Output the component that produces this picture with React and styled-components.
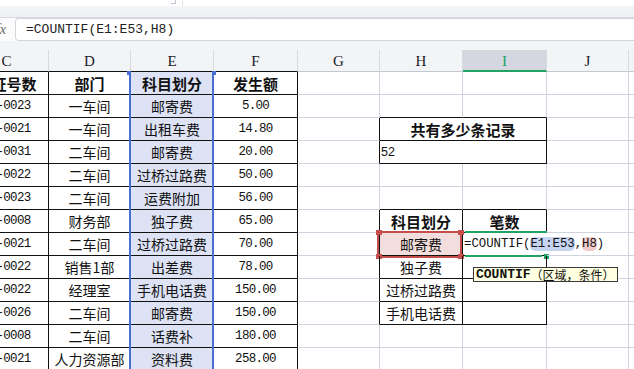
import React from 'react';
import styled, { createGlobalStyle } from 'styled-components';

const GRID = '#cfd3df';
const DARK = '#111';
const GREEN = '#21a366';
const BLUE = '#4a6fd3';
const RED = '#c44f4c';

const COLUMNS = [
  { id: 'C', width: 84 },
  { id: 'D', width: 82 },
  { id: 'E', width: 83 },
  { id: 'F', width: 84 },
  { id: 'G', width: 82 },
  { id: 'H', width: 83 },
  { id: 'I', width: 84 },
  { id: 'J', width: 82 },
  { id: 'K', width: 60 },
];

// 凭证号 / 部门 / 科目划分 / 发生额
const ledger = [
  ['凭证号数', '部门', '科目划分', '发生额'],
  ['记-0023', '一车间', '邮寄费', '5.00'],
  ['记-0021', '一车间', '出租车费', '14.80'],
  ['记-0031', '二车间', '邮寄费', '20.00'],
  ['记-0022', '二车间', '过桥过路费', '50.00'],
  ['记-0023', '二车间', '运费附加', '56.00'],
  ['记-0008', '财务部', '独子费', '65.00'],
  ['记-0021', '二车间', '过桥过路费', '70.00'],
  ['记-0022', '销售1部', '出差费', '78.00'],
  ['记-0022', '经理室', '手机电话费', '150.00'],
  ['记-0026', '二车间', '邮寄费', '150.00'],
  ['记-0008', '二车间', '话费补', '180.00'],
  ['记-0021', '人力资源部', '资料费', '258.00'],
];

const summary = {
  7: ['科目划分', '笔数'],
  8: ['邮寄费', ''],
  9: ['独子费', ''],
  10: ['过桥过路费', ''],
  11: ['手机电话费', ''],
};

const ROW_COUNT = 13;

const inTable = (r, c) => {
  if (r >= 1 && r <= 13 && c >= 0 && c <= 3) return true;
  if ((r === 3 || r === 4 || (r >= 7 && r <= 11)) && (c === 5 || c === 6)) return true;
  return false;
};

const GlobalStyle = createGlobalStyle`
  html, body {
    margin: 0;
    padding: 0;
    background: #fff;
  }
  body {
    font-family: "Noto Sans CJK SC", "Noto Sans", sans-serif;
  }
`;

const Page = styled.div`
  width: 634px;
  height: 369px;
  overflow: hidden;
  background: #fff;
`;

const TopStrip = styled.div`
  height: 6px;
  display: flex;
  align-items: flex-start;
`;

const StripCorner = styled.span`
  margin-left: 171px;
  width: 4px;
  height: 3px;
  border-right: 1px solid #c3c6cd;
  border-bottom: 1px solid #c3c6cd;
`;

const StripDivider = styled.span`
  margin-left: 6px;
  width: 1px;
  height: 6px;
  background: #e2e4e8;
`;

const TabBand = styled.div`
  height: 11px;
  background: linear-gradient(#f4f5f7, #eef0f3);
  border-bottom: 1px solid #d7dae0;
`;

const FormulaRow = styled.div`
  height: 23px;
  display: flex;
  align-items: stretch;
  background: #fbfbfc;
`;

const FxMark = styled.span`
  width: 15px;
  flex: none;
  display: flex;
  align-items: center;
  justify-content: flex-end;
  padding-right: 9px;
  box-sizing: border-box;
  font-family: "Liberation Serif", serif;
  font-style: italic;
  font-size: 14px;
  color: #666;
  white-space: nowrap;
`;

const FormulaBox = styled.div`
  flex: 1;
  box-sizing: border-box;
  display: flex;
  align-items: center;
  padding-left: 10px;
  background: #fff;
  border: 1px solid #d2d5dc;
  border-right: none;
  border-radius: 4px 0 0 4px;
  font-family: "Liberation Mono", monospace;
  font-size: 13px;
  color: #222;
`;

const Sheet = styled.div`
  display: grid;
  grid-template-columns: ${COLUMNS.map((c) => c.width + 'px').join(' ')};
  margin-left: -35px;
`;

const HeaderBand = styled(Sheet)`
  background: #f3f4f6;
  padding-top: 9px;
`;

const HeaderCell = styled.div`
  box-sizing: border-box;
  height: 22px;
  display: flex;
  align-items: center;
  justify-content: center;
  padding-top: 2px;
  background: ${(p) => (p.$active ? '#d4d7df' : 'transparent')};
  border-right: 1px solid #d6d9df;
  border-bottom: ${(p) =>
    p.$active ? `2px solid ${GREEN}` : `1px solid ${p.$dark ? DARK : '#c3c7d0'}`};
  font-family: "Liberation Serif", serif;
  font-size: 15px;
  color: ${(p) => (p.$active ? GREEN : '#1b1b2a')};
`;

const Body = styled(Sheet)`
  grid-auto-rows: 23px;
`;

const Cell = styled.div`
  position: relative;
  box-sizing: border-box;
  display: flex;
  align-items: center;
  justify-content: ${(p) => (p.$left ? 'flex-start' : 'center')};
  padding: 0 ${(p) => (p.$left ? '1px' : '2px')};
  grid-column: span ${(p) => p.$span || 1};
  background: ${(p) => p.$fill || 'transparent'};
  border-right: 1px solid ${(p) => (p.$hideRight ? '#fff' : p.$darkRight ? DARK : GRID)};
  border-bottom: 1px solid ${(p) => (p.$darkBottom ? DARK : GRID)};
  font-family: "Noto Sans CJK SC", sans-serif;
  font-size: ${(p) => (p.$bold ? '15px' : '14px')};
  font-weight: ${(p) => (p.$bold ? 700 : 400)};
  color: #111;
  white-space: nowrap;
`;

const NumText = styled.span`
  font-family: "Liberation Mono", monospace;
  font-size: 12.5px;
  letter-spacing: -0.7px;
  color: #111;
`;

const PlainNum = styled.span`
  font-family: "Liberation Sans", sans-serif;
  font-size: 12.5px;
  color: #111;
`;

const RangeEdge = styled.span`
  position: absolute;
  top: ${(p) => (p.$first ? '0' : '-1px')};
  bottom: -1px;
  left: -2px;
  right: -1px;
  border-left: 2px solid ${BLUE};
  border-right: 2px solid ${BLUE};
  pointer-events: none;
`;

const RangeHandle = styled.span`
  position: absolute;
  top: -1px;
  ${(p) => (p.$side === 'left' ? 'left: -4px;' : 'right: -3px;')}
  width: 4px;
  height: 4px;
  background: ${BLUE};
`;

const RefFrame = styled.span`
  position: absolute;
  top: -2px;
  left: -3px;
  right: 0;
  bottom: -3px;
  border: 2px solid ${RED};
  pointer-events: none;
`;

const RefHandle = styled.span`
  position: absolute;
  width: 6px;
  height: 5px;
  background: ${RED};
  ${(p) => (p.$y === 'top' ? 'top: -3px;' : 'bottom: -4px;')}
  ${(p) => (p.$x === 'left' ? 'left: -4px;' : 'right: -2px;')}
`;

const EditLine = styled.span`
  position: absolute;
  left: 2px;
  height: 2px;
  background: ${GREEN};
  ${(p) => (p.$edge === 'top' ? 'top: -2px; right: -1px;' : 'bottom: -2px; right: 4px;')}
`;

const EditHandle = styled.span`
  position: absolute;
  right: -3px;
  bottom: -4px;
  width: 5px;
  height: 5px;
  background: ${GREEN};
`;

const EditText = styled.span`
  position: relative;
  z-index: 2;
  font-family: "Liberation Mono", monospace;
  font-size: 12.3px;
  color: #111;
`;

const RefToken = styled.span`
  background: ${(p) => (p.$tone === 'blue' ? '#c6d3f1' : '#f1caca')};
  border-radius: 5px;
`;

const Tip = styled.div`
  position: absolute;
  z-index: 3;
  top: 34px;
  left: 10px;
  height: 15px;
  box-sizing: border-box;
  display: flex;
  align-items: center;
  padding: 0 2px;
  background: #ffffe1;
  border: 1px solid #3a3a3a;
  white-space: nowrap;
`;

const TipName = styled.span`
  font-family: "Liberation Mono", monospace;
  font-weight: 700;
  font-size: 13px;
  color: #111;
`;

const TipArgs = styled.span`
  font-family: "Noto Sans CJK SC", sans-serif;
  font-size: 12px;
  line-height: 12px;
  color: #111;
`;

const renderLedger = (r, c) => {
  const value = ledger[r - 1][c];
  if (r === 1) return value;
  if (c === 0) {
    return (
      <>
        {value.slice(0, 1)}
        <NumText>{value.slice(1)}</NumText>
      </>
    );
  }
  if (c === 3) return <NumText>{value}</NumText>;
  return value;
};

const App = () => {
  const cells = [];

  for (let r = 1; r <= ROW_COUNT; r++) {
    for (let c = 0; c < COLUMNS.length; c++) {
      const key = `${r}-${c}`;
      const merged = (r === 3 || r === 4) && c === 5;
      if ((r === 3 || r === 4) && c === 6) continue;

      const lastCol = merged ? 6 : c;
      const base = {
        $darkRight: inTable(r, lastCol) || inTable(r, lastCol + 1),
        $darkBottom: inTable(r, c) || inTable(r + 1, c),
        $span: merged ? 2 : 1,
      };

      if (c <= 3) {
        const isE = c === 2;
        cells.push(
          <Cell key={key} {...base} $bold={r === 1} $fill={isE ? '#dde3f5' : undefined}>
            {renderLedger(r, c)}
            {isE && <RangeEdge $first={r === 1} />}
            {isE && r === 1 && (
              <>
                <RangeHandle $side="left" />
                <RangeHandle $side="right" />
              </>
            )}
          </Cell>
        );
        continue;
      }

      if (merged && r === 3) {
        cells.push(
          <Cell key={key} {...base} $bold>
            共有多少条记录
          </Cell>
        );
        continue;
      }
      if (merged && r === 4) {
        cells.push(
          <Cell key={key} {...base} $left>
            <PlainNum>52</PlainNum>
          </Cell>
        );
        continue;
      }

      if (summary[r] && (c === 5 || c === 6)) {
        const text = summary[r][c - 5];
        if (r === 8 && c === 5) {
          cells.push(
            <Cell key={key} {...base} $fill="#f3dedd">
              {text}
              <RefFrame />
              <RefHandle $x="left" $y="top" />
              <RefHandle $x="right" $y="top" />
              <RefHandle $x="left" $y="bottom" />
              <RefHandle $x="right" $y="bottom" />
            </Cell>
          );
          continue;
        }
        if (r === 8 && c === 6) {
          cells.push(
            <Cell key={key} {...base} $left $hideRight>
              <EditText>
                =COUNTIF(<RefToken $tone="blue">E1:E53</RefToken>,<RefToken $tone="red">H8</RefToken>)
              </EditText>
              <EditLine $edge="top" />
              <EditLine $edge="bottom" />
              <EditHandle />
              <Tip>
                <TipName>COUNTIF</TipName>
                <TipArgs>（区域，条件）</TipArgs>
              </Tip>
            </Cell>
          );
          continue;
        }
        cells.push(
          <Cell key={key} {...base} $bold={r === 7}>
            {text}
          </Cell>
        );
        continue;
      }

      cells.push(<Cell key={key} {...base} />);
    }
  }

  return (
    <Page>
      <GlobalStyle />
      <TopStrip>
        <StripCorner />
        <StripDivider />
      </TopStrip>
      <TabBand />
      <FormulaRow>
        <FxMark>fx</FxMark>
        <FormulaBox>=COUNTIF(E1:E53,H8)</FormulaBox>
      </FormulaRow>
      <HeaderBand>
        {COLUMNS.map((col, i) => (
          <HeaderCell key={col.id} $active={col.id === 'I'} $dark={i <= 3}>
            {col.id === 'K' ? '' : col.id}
          </HeaderCell>
        ))}
      </HeaderBand>
      <Body>{cells}</Body>
    </Page>
  );
};

export default App;
